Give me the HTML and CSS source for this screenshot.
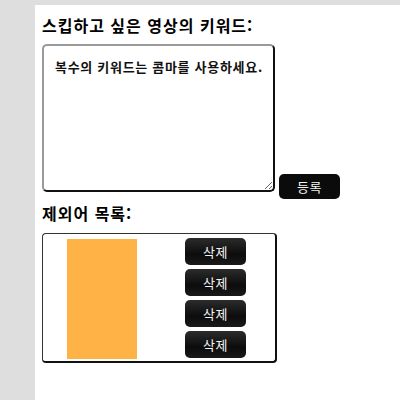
FILE: index.html
```html
<!DOCTYPE html>
<html lang="ko">
<head>
<meta charset="utf-8">
<link rel="stylesheet" href="styles.css">
</head>
<body>
<div class="panel">
  <h2 class="title">스킵하고 싶은 영상의 키워드:</h2>
  <div class="input-row">
    <textarea class="keywords" placeholder="복수의 키워드는 콤마를 사용하세요."></textarea>
    <button class="btn add">등록</button>
  </div>
  <h2 class="title second">제외어 목록:</h2>
  <div class="list">
    <div class="items"></div>
    <div class="actions">
      <button class="btn del">삭제</button>
      <button class="btn del">삭제</button>
      <button class="btn del">삭제</button>
      <button class="btn del">삭제</button>
    </div>
  </div>
</div>
</body>
</html>
```

FILE: styles.css
```css
html, body {
  margin: 0;
  padding: 0;
  background: #dedede;
  font-family: "Noto Sans CJK KR", "Noto Sans", sans-serif;
}
.panel {
  margin: 5px 0 0 35px;
  background: #ffffff;
  padding: 10px 0 0 7px;
  height: 385px;
}
.title {
  margin: 0;
  font-size: 16px;
  line-height: 20px;
  font-weight: bold;
  letter-spacing: 1px;
  color: #000;
}
.input-row {
  display: flex;
  margin-top: 9px;
}
.keywords {
  box-sizing: border-box;
  width: 233px;
  height: 148px;
  margin: 0;
  padding: 13px 2px 13px 11px;
  border: 2px solid;
  border-color: #9a9a9a #111 #111 #9a9a9a;
  border-radius: 5px;
  font-family: inherit;
  font-size: 13px;
  line-height: 16px;
  font-weight: bold;
  letter-spacing: 0.7px;
  outline: none;
}
.keywords::placeholder {
  color: #111;
  font-weight: bold;
}
.btn {
  font-family: inherit;
  color: #f4f4f4;
  border: none;
  padding: 0;
  font-size: 13px;
  letter-spacing: 0.5px;
  cursor: pointer;
}
.add {
  width: 61px;
  height: 25px;
  margin: 130px 0 0 4px;
  background: #0b0b0b;
  border-radius: 5px;
}
.second {
  margin-top: 4px;
}
.list {
  box-sizing: border-box;
  display: flex;
  width: 235px;
  height: 130px;
  margin-top: 10px;
  border: 1px solid #333;
  border-right: 2px solid #111;
  border-bottom: 2px solid #111;
  border-radius: 4px;
}
.items {
  width: 70px;
  height: 120px;
  margin: 5px 0 0 24px;
  background: #ffb347;
}
.actions {
  display: flex;
  flex-direction: column;
  gap: 4px;
  margin: 4px 0 0 48px;
}
.del {
  width: 61px;
  height: 27px;
  border-radius: 5px;
  background: linear-gradient(#2c2c2c, #0c0c0c 60%, #1a1a1a);
}
```
